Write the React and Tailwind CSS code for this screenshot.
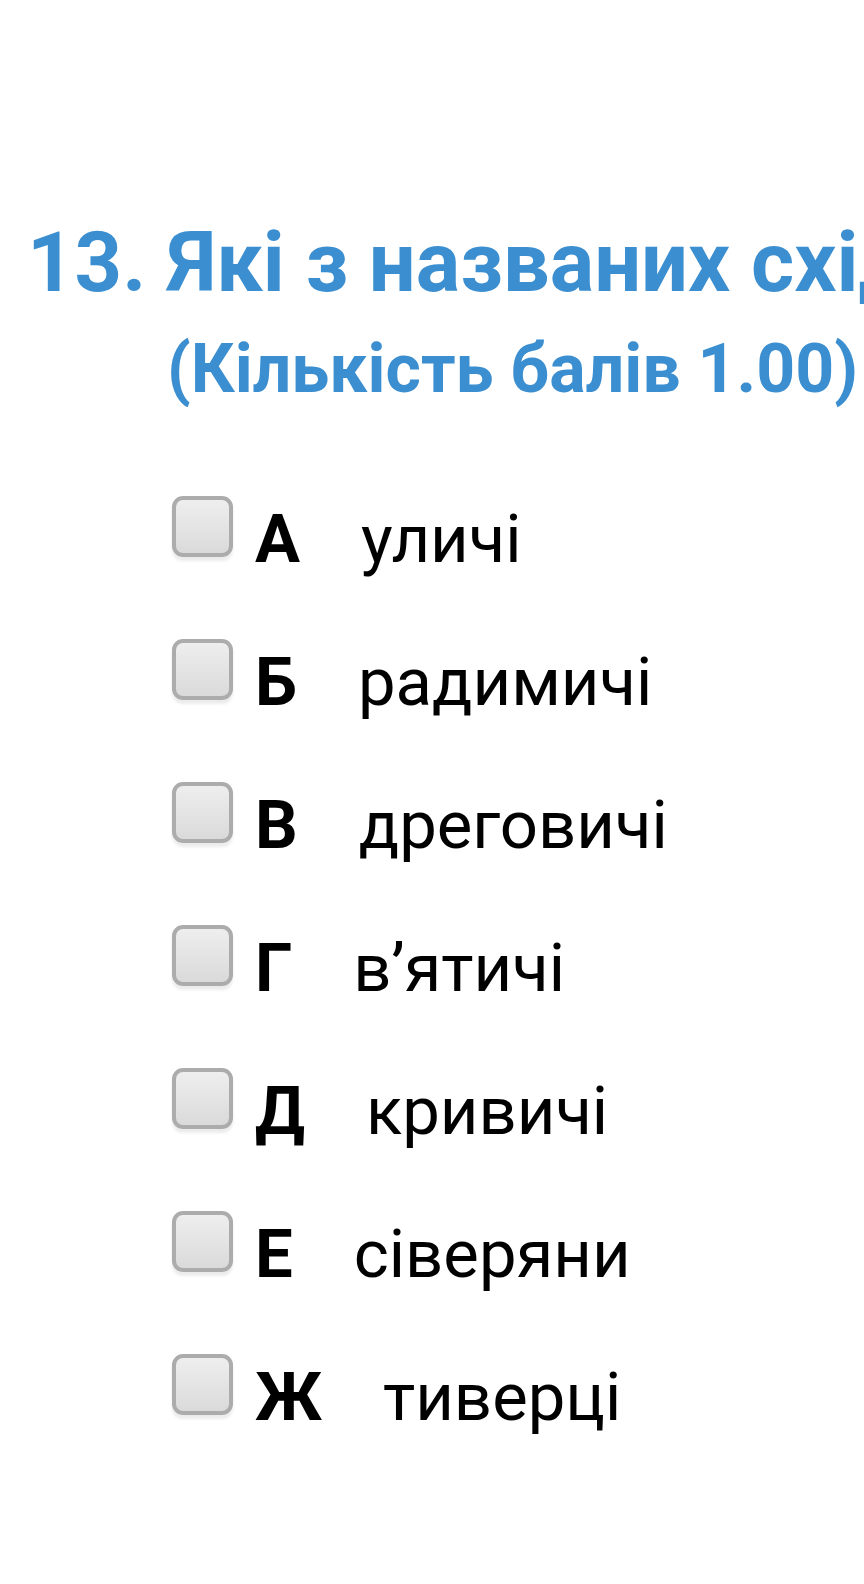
import React from 'react';

const options = [
  { letter: 'А', text: 'уличі' },
  { letter: 'Б', text: 'радимичі' },
  { letter: 'В', text: 'дреговичі' },
  { letter: 'Г', text: 'в’ятичі' },
  { letter: 'Д', text: 'кривичі' },
  { letter: 'Е', text: 'сіверяни' },
  { letter: 'Ж', text: 'тиверці' },
];

const Checkbox = () => (
  <div className="w-[61px] h-[61px] shrink-0 rounded-[11px] border-[4px] border-[#acacac] bg-gradient-to-b from-[#eeeeee] to-[#dadada] shadow-[0_4px_3px_rgba(0,0,0,0.08)]" />
);

const App = () => {
  return (
    <div className="w-[864px] h-[1584px] bg-white overflow-hidden font-['Roboto',sans-serif]">
      <div className="pt-[221px]">
        <h1 className="pl-[27px] text-[83px] leading-none font-bold text-[#3b8fd1] whitespace-nowrap overflow-hidden">
          13. Які з названих східнослов’янських племен
        </h1>
        <p className="mt-[31px] pl-[167px] text-[68px] leading-none font-bold text-[#3b8fd1] whitespace-nowrap">
          (Кількість балів 1.00)
        </p>
      </div>
      <div className="mt-[93px] pl-[172px] flex flex-col gap-[66px]">
        {options.map((o) => (
          <div key={o.letter} className="flex items-start">
            <Checkbox />
            <div className="mt-[10px] ml-[22px] flex items-baseline text-[67px] leading-none text-black">
              <span className="font-bold">{o.letter}</span>
              <span className="ml-[61px]">{o.text}</span>
            </div>
          </div>
        ))}
      </div>
    </div>
  );
};

export default App;
